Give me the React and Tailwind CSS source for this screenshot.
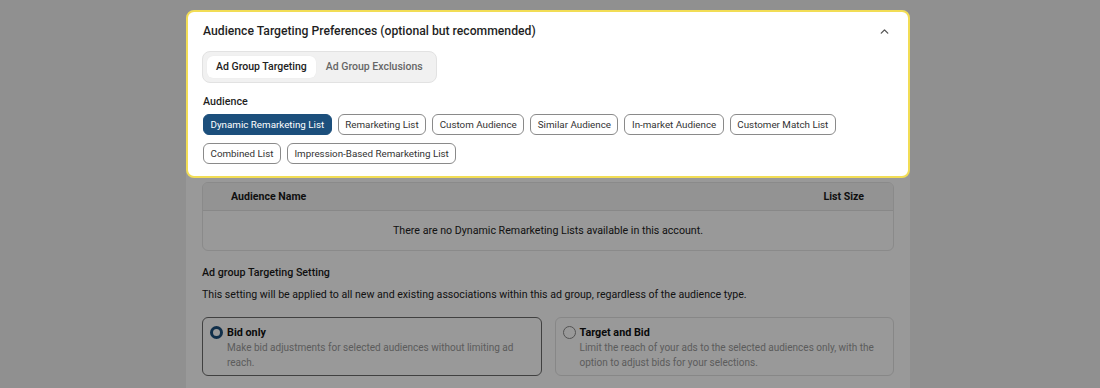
import React, { useState } from "react";
import { ChevronUp } from "lucide-react";

const AUDIENCE_TYPES = [
  "Dynamic Remarketing List",
  "Remarketing List",
  "Custom Audience",
  "Similar Audience",
  "In-market Audience",
  "Customer Match List",
  "Combined List",
  "Impression-Based Remarketing List",
];

const TARGETING_OPTIONS = [
  {
    id: "bid",
    label: "Bid only",
    description: "Make bid adjustments for selected audiences without limiting ad reach.",
  },
  {
    id: "target",
    label: "Target and Bid",
    description:
      "Limit the reach of your ads to the selected audiences only, with the option to adjust bids for your selections.",
  },
];

function AudiencePreferences({ tab, onTab, audience, onAudience }) {
  return (
    <section className="relative z-20 bg-white border-2 border-[#f2dd55] rounded-lg px-[15px] pt-[10px] pb-[12px]">
      <div className="flex items-center justify-between h-[18px]">
        <h2 className="text-[12.2px] font-medium text-[#1f1f1f]">
          Audience Targeting Preferences (optional but recommended)
        </h2>
        <ChevronUp size={13} strokeWidth={2.5} className="text-[#555] mr-[2px]" />
      </div>

      <div className="mt-[11px] inline-flex items-center gap-[1px] bg-[#f1f1f1] border border-[#e2e2e2] rounded-lg p-[4px] pr-[4px] -ml-[1px]">
        {["Ad Group Targeting", "Ad Group Exclusions"].map((t) => (
          <button
            key={t}
            onClick={() => onTab(t)}
            className={`h-[22px] px-[9px] rounded-md text-[10.5px] font-medium ${
              tab === t ? "bg-white text-[#222] shadow-[0_0_1px_rgba(0,0,0,0.08)]" : "text-[#666]"
            }`}
          >
            {t}
          </button>
        ))}
      </div>

      <div className="mt-[11px] text-[10.7px] font-medium text-[#1f1f1f] leading-[16px]">Audience</div>
      <div className="mt-[4px] flex flex-wrap gap-x-[6px] gap-y-[8px] max-w-[660px]">
        {AUDIENCE_TYPES.map((a) => (
          <button
            key={a}
            onClick={() => onAudience(a)}
            className={`h-[21px] px-[6.5px] rounded-md border text-[9.8px] leading-none ${
              audience === a
                ? "bg-[#1c4f7c] border-[#1c4f7c] text-white"
                : "bg-white border-[#8a8a8a] text-[#333]"
            }`}
          >
            {a}
          </button>
        ))}
      </div>
    </section>
  );
}

function AudienceTable({ audience }) {
  return (
    <div className="mt-[4px] mx-[16px] border border-[#e6e6e6] rounded-md overflow-hidden">
      <div className="h-[28px] bg-[#f5f5f5] border-b border-[#e3e3e3] flex items-center justify-between pl-[28px] pr-[29px] text-[10.6px] font-bold text-[#1a1a1a]">
        <span>Audience Name</span>
        <span>List Size</span>
      </div>
      <div className="h-[39px] flex items-center justify-center text-[10.65px] text-[#222]">
        There are no {audience}s available in this account.
      </div>
    </div>
  );
}

function TargetingSetting({ value, onChange }) {
  return (
    <div className="mx-[16px] mt-[14px]">
      <div className="text-[10.7px] font-medium text-[#1a1a1a] leading-[16px]">Ad group Targeting Setting</div>
      <p className="mt-[6px] text-[10.6px] text-[#222] leading-[16px]">
        This setting will be applied to all new and existing associations within this ad group, regardless of the
        audience type.
      </p>
      <div className="mt-[14px] grid grid-cols-2 gap-[13px]">
        {TARGETING_OPTIONS.map((o) => (
          <label
            key={o.id}
            onClick={() => onChange(o.id)}
            className={`h-[59px] rounded-md border flex gap-[4px] pl-[7px] pr-[14px] pt-[7px] cursor-pointer ${
              value === o.id ? "border-[#6b6b6b]" : "border-[#e2e2e2]"
            }`}
          >
            <span
              className={`mt-[1px] w-[13px] h-[13px] rounded-full shrink-0 bg-white ${
                value === o.id ? "border-[3px] border-[#1c4f7c]" : "border border-[#8a8a8a]"
              }`}
            />
            <span className="flex flex-col">
              <span className="text-[10.8px] font-bold text-[#111] leading-[15px]">{o.label}</span>
              <span className="text-[10px] text-[#9a9a9a] leading-[15px]">{o.description}</span>
            </span>
          </label>
        ))}
      </div>
    </div>
  );
}

export default function App() {
  const [tab, setTab] = useState("Ad Group Targeting");
  const [audience, setAudience] = useState("Dynamic Remarketing List");
  const [targeting, setTargeting] = useState("bid");

  return (
    <div className="relative min-h-[388px] bg-[#f0f0f0] font-['Roboto','Liberation_Sans',sans-serif] overflow-hidden">
      <div className="fixed inset-0 z-10 bg-black/40 pointer-events-none" />
      <div className="pt-[10px]">
        <div className="ml-[186px] w-[724px] bg-white rounded-lg pb-[20px]">
          <AudiencePreferences tab={tab} onTab={setTab} audience={audience} onAudience={setAudience} />
          <AudienceTable audience={audience} />
          <TargetingSetting value={targeting} onChange={setTargeting} />
        </div>
      </div>
    </div>
  );
}
